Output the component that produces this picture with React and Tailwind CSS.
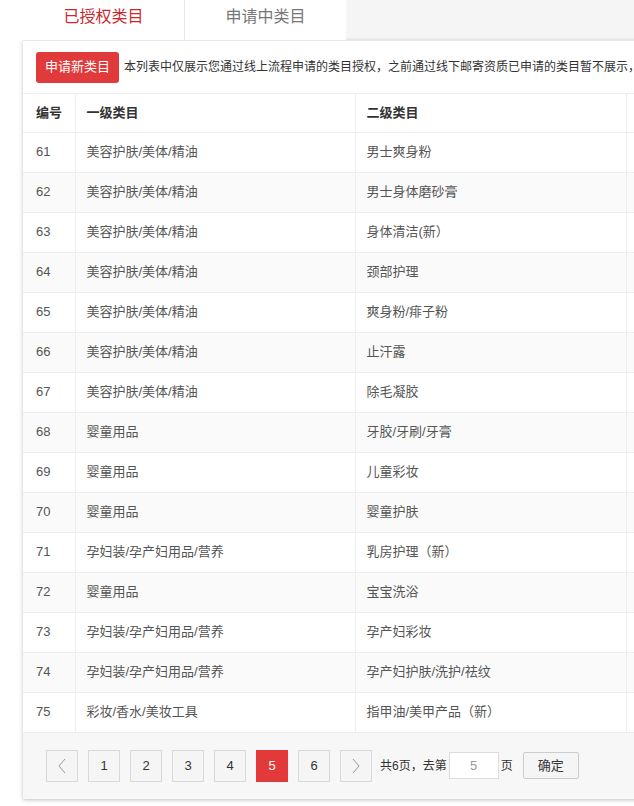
import React from "react";

const rows = [
  [61, "美容护肤/美体/精油", "男士爽身粉"],
  [62, "美容护肤/美体/精油", "男士身体磨砂膏"],
  [63, "美容护肤/美体/精油", "身体清洁(新）"],
  [64, "美容护肤/美体/精油", "颈部护理"],
  [65, "美容护肤/美体/精油", "爽身粉/痱子粉"],
  [66, "美容护肤/美体/精油", "止汗露"],
  [67, "美容护肤/美体/精油", "除毛凝胶"],
  [68, "婴童用品", "牙胶/牙刷/牙膏"],
  [69, "婴童用品", "儿童彩妆"],
  [70, "婴童用品", "婴童护肤"],
  [71, "孕妇装/孕产妇用品/营养", "乳房护理（新）"],
  [72, "婴童用品", "宝宝洗浴"],
  [73, "孕妇装/孕产妇用品/营养", "孕产妇彩妆"],
  [74, "孕妇装/孕产妇用品/营养", "孕产妇护肤/洗护/祛纹"],
  [75, "彩妆/香水/美妆工具", "指甲油/美甲产品（新）"],
];

const Chevron = ({ dir }) => (
  <svg width="10" height="16" viewBox="0 0 10 16" fill="none" stroke="#999" strokeWidth="1">
    {dir === "left" ? <polyline points="8,1 2,8 8,15" /> : <polyline points="2,1 8,8 2,15" />}
  </svg>
);

const PageBtn = ({ children, active }) => (
  <button
    className={
      active
        ? "w-8 h-8 flex items-center justify-center bg-[#e23a3a] border border-[#e23a3a] text-white text-[13px]"
        : "w-8 h-8 flex items-center justify-center bg-[#f5f5f5] border border-[#d9d9d9] text-[#333] text-[13px]"
    }
  >
    {children}
  </button>
);

const App = () => {
  return (
    <div className="w-[634px] h-[806px] overflow-hidden bg-white font-['Liberation_Sans','Noto_Sans_CJK_SC',sans-serif]">
      <div className="ml-[23px] w-[760px]">
        {/* tabs */}
        <div className="flex h-[40px] bg-[#f5f5f5]">
          <div className="w-[161px] bg-white flex items-center justify-center pb-[7px] text-[16px] text-[#c9282d]">
            已授权类目
          </div>
          <div className="w-[162px] bg-white border-l border-[#e8e8e8] flex items-center justify-center pb-[7px] text-[16px] text-[#777]">
            申请中类目
          </div>
        </div>

        <div className="bg-white border-t border-[#e6e6e6] shadow-[0_1px_4px_rgba(0,0,0,0.25)]">
          {/* toolbar */}
          <div className="flex items-center h-[53px] pl-[13px] border-b border-[#eee]">
            <button className="h-[31px] px-[9px] bg-[#e03a3a] rounded-[3px] text-white text-[13px]">
              申请新类目
            </button>
            <span className="ml-[5px] text-[12px] text-[#333] whitespace-nowrap">
              本列表中仅展示您通过线上流程申请的类目授权，之前通过线下邮寄资质已申请的类目暂不展示，
            </span>
          </div>

          {/* table */}
          <table className="w-full border-collapse text-[13px] table-fixed">
            <colgroup>
              <col className="w-[52px]" />
              <col className="w-[280px]" />
              <col className="w-[271px]" />
              <col />
            </colgroup>
            <thead>
              <tr className="h-[38px] border-b border-[#eee]">
                <th className="text-left font-semibold text-[#333] pl-[13px] border-r border-[#eee]">编号</th>
                <th className="text-left font-semibold text-[#333] pl-[11px] border-r border-[#eee]">一级类目</th>
                <th className="text-left font-semibold text-[#333] pl-[11px] border-r border-[#eee]">二级类目</th>
                <th></th>
              </tr>
            </thead>
            <tbody>
              {rows.map(([id, a, b], i) => (
                <tr key={id} className={i % 2 === 1 ? "h-10 border-b border-[#eee] bg-[#fafafa]" : "h-10 border-b border-[#eee] bg-white"}>
                  <td className="pl-[13px] text-[#555] border-r border-[#eee]">{id}</td>
                  <td className="pl-[11px] text-[#555] border-r border-[#eee]">{a}</td>
                  <td className="pl-[11px] text-[#555] border-r border-[#eee]">{b}</td>
                  <td></td>
                </tr>
              ))}
            </tbody>
          </table>

          {/* pagination */}
          <div className="h-[66px] bg-[#f7f7f7] flex items-center pl-[23px] text-[12px] text-[#333]">
            <div className="flex items-center gap-[10px]">
              <PageBtn><Chevron dir="left" /></PageBtn>
              <PageBtn>1</PageBtn>
              <PageBtn>2</PageBtn>
              <PageBtn>3</PageBtn>
              <PageBtn>4</PageBtn>
              <PageBtn active>5</PageBtn>
              <PageBtn>6</PageBtn>
              <PageBtn><Chevron dir="right" /></PageBtn>
            </div>
            <span className="ml-[8px]">共6页，去第</span>
            <div className="ml-[2px] w-[50px] h-[27px] bg-white border border-[#ddd] flex items-center justify-center text-[#999] text-[13px]">
              5
            </div>
            <span className="ml-[2px]">页</span>
            <button className="ml-[10px] w-[56px] h-[27px] bg-[#f5f5f5] border border-[#ccc] rounded-[2px] text-[#333] text-[13px]">
              确定
            </button>
          </div>
        </div>
      </div>
    </div>
  );
};

export default App;
